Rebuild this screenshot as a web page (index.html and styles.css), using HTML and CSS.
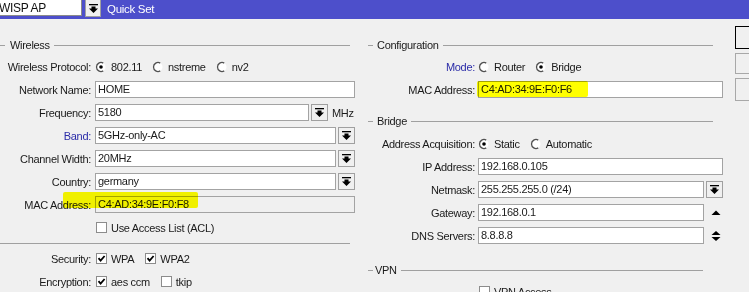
FILE: index.html
```html
<!DOCTYPE html>
<html>
<head>
<meta charset="utf-8">
<link rel="stylesheet" href="styles.css">
</head>
<body>
<div class="topbar">
  <div class="qs-select">WISP AP</div>
  <div class="btn dd top-dd"><svg class="ico-dd" width="9" height="9" viewBox="0 0 9 9"><rect x="0" y="0" width="9" height="1.3"/><polygon points="2.5,2.5 6.5,2.5 6.5,4.5 9,4.5 4.5,9 0,4.5 2.5,4.5"/></svg></div>
  <div class="qs-title">Quick Set</div>
</div>

<div class="main">
  <div class="col col-left">
    <div class="legend leg-left"><span class="dash"></span><span class="leg-text">Wireless</span><span class="leg-line"></span></div>
    <div class="form">
      <div class="row"><span class="lbl">Wireless Protocol:</span>
        <div class="field opts">
          <span class="opt"><svg class="radio" width="12" height="12" viewBox="0 0 12 12"><circle cx="6" cy="6" r="4.5" fill="#fff"/><path d="M8.25,2.1 A4.5,4.5 0 1 0 8.25,9.9" fill="none" stroke="#505050" stroke-width="1.3"/><circle cx="6" cy="6" r="1.8" fill="#000"/></svg>802.11</span>
          <span class="opt"><svg class="radio" width="12" height="12" viewBox="0 0 12 12"><circle cx="6" cy="6" r="4.5" fill="#fff"/><path d="M8.25,2.1 A4.5,4.5 0 1 0 8.25,9.9" fill="none" stroke="#505050" stroke-width="1.3"/></svg>nstreme</span>
          <span class="opt"><svg class="radio" width="12" height="12" viewBox="0 0 12 12"><circle cx="6" cy="6" r="4.5" fill="#fff"/><path d="M8.25,2.1 A4.5,4.5 0 1 0 8.25,9.9" fill="none" stroke="#505050" stroke-width="1.3"/></svg>nv2</span>
        </div>
      </div>
      <div class="row"><span class="lbl">Network Name:</span><div class="field"><div class="inp w-full">HOME</div></div></div>
      <div class="row"><span class="lbl">Frequency:</span><div class="field"><div class="inp w-freq">5180</div><div class="btn dd"><svg class="ico-dd" width="9" height="9" viewBox="0 0 9 9"><rect x="0" y="0" width="9" height="1.3"/><polygon points="2.5,2.5 6.5,2.5 6.5,4.5 9,4.5 4.5,9 0,4.5 2.5,4.5"/></svg></div><span class="unit">MHz</span></div></div>
      <div class="row"><span class="lbl blue">Band:</span><div class="field"><div class="inp w-sel">5GHz-only-AC</div><div class="btn dd"><svg class="ico-dd" width="9" height="9" viewBox="0 0 9 9"><rect x="0" y="0" width="9" height="1.3"/><polygon points="2.5,2.5 6.5,2.5 6.5,4.5 9,4.5 4.5,9 0,4.5 2.5,4.5"/></svg></div></div></div>
      <div class="row"><span class="lbl">Channel Width:</span><div class="field"><div class="inp w-sel">20MHz</div><div class="btn dd"><svg class="ico-dd" width="9" height="9" viewBox="0 0 9 9"><rect x="0" y="0" width="9" height="1.3"/><polygon points="2.5,2.5 6.5,2.5 6.5,4.5 9,4.5 4.5,9 0,4.5 2.5,4.5"/></svg></div></div></div>
      <div class="row"><span class="lbl">Country:</span><div class="field"><div class="inp w-sel">germany</div><div class="btn dd"><svg class="ico-dd" width="9" height="9" viewBox="0 0 9 9"><rect x="0" y="0" width="9" height="1.3"/><polygon points="2.5,2.5 6.5,2.5 6.5,4.5 9,4.5 4.5,9 0,4.5 2.5,4.5"/></svg></div></div></div>
      <div class="row hl-row"><span class="lbl">MAC Address:</span><div class="field"><div class="inp w-full disabled">C4:AD:34:9E:F0:F8</div></div><span class="hl hl-left"></span></div>
      <div class="row"><span class="lbl"></span><div class="field opts"><span class="opt"><svg class="cb" width="11" height="11" viewBox="0 0 11 11"><rect x="0.5" y="0.5" width="10" height="10" fill="#fff" stroke="#8c8c8c"/></svg>Use Access List (ACL)</span></div></div>
    </div>
    <div class="sep"></div>
    <div class="form">
      <div class="row"><span class="lbl">Security:</span>
        <div class="field opts">
          <span class="opt"><svg class="cb" width="11" height="11" viewBox="0 0 11 11"><rect x="0.5" y="0.5" width="10" height="10" fill="#fff" stroke="#8c8c8c"/><path d="M2.5,5.2 L4.6,7.6 L8.6,3" fill="none" stroke="#000" stroke-width="1.8"/></svg>WPA</span>
          <span class="opt"><svg class="cb" width="11" height="11" viewBox="0 0 11 11"><rect x="0.5" y="0.5" width="10" height="10" fill="#fff" stroke="#8c8c8c"/><path d="M2.5,5.2 L4.6,7.6 L8.6,3" fill="none" stroke="#000" stroke-width="1.8"/></svg>WPA2</span>
        </div>
      </div>
      <div class="row"><span class="lbl">Encryption:</span>
        <div class="field opts">
          <span class="opt"><svg class="cb" width="11" height="11" viewBox="0 0 11 11"><rect x="0.5" y="0.5" width="10" height="10" fill="#fff" stroke="#8c8c8c"/><path d="M2.5,5.2 L4.6,7.6 L8.6,3" fill="none" stroke="#000" stroke-width="1.8"/></svg>aes ccm</span>
          <span class="opt"><svg class="cb" width="11" height="11" viewBox="0 0 11 11"><rect x="0.5" y="0.5" width="10" height="10" fill="#fff" stroke="#8c8c8c"/></svg>tkip</span>
        </div>
      </div>
    </div>
  </div>

  <div class="col col-right">
    <div class="legend leg-right"><span class="dash"></span><span class="leg-text">Configuration</span><span class="leg-line"></span></div>
    <div class="form rform">
      <div class="row"><span class="lbl blue">Mode:</span>
        <div class="field opts">
          <span class="opt"><svg class="radio" width="12" height="12" viewBox="0 0 12 12"><circle cx="6" cy="6" r="4.5" fill="#fff"/><path d="M8.25,2.1 A4.5,4.5 0 1 0 8.25,9.9" fill="none" stroke="#505050" stroke-width="1.3"/></svg>Router</span>
          <span class="opt"><svg class="radio" width="12" height="12" viewBox="0 0 12 12"><circle cx="6" cy="6" r="4.5" fill="#fff"/><path d="M8.25,2.1 A4.5,4.5 0 1 0 8.25,9.9" fill="none" stroke="#505050" stroke-width="1.3"/><circle cx="6" cy="6" r="1.8" fill="#000"/></svg>Bridge</span>
        </div>
      </div>
      <div class="row hl-row"><span class="lbl">MAC Address:</span><div class="field"><div class="inp w-rfull">C4:AD:34:9E:F0:F6</div></div><span class="hl hl-right"></span></div>
    </div>

    <div class="legend leg-right leg-bridge"><span class="dash"></span><span class="leg-text">Bridge</span><span class="leg-line"></span></div>
    <div class="form rform">
      <div class="row"><span class="lbl">Address Acquisition:</span>
        <div class="field opts">
          <span class="opt"><svg class="radio" width="12" height="12" viewBox="0 0 12 12"><circle cx="6" cy="6" r="4.5" fill="#fff"/><path d="M8.25,2.1 A4.5,4.5 0 1 0 8.25,9.9" fill="none" stroke="#505050" stroke-width="1.3"/><circle cx="6" cy="6" r="1.8" fill="#000"/></svg>Static</span>
          <span class="opt"><svg class="radio" width="12" height="12" viewBox="0 0 12 12"><circle cx="6" cy="6" r="4.5" fill="#fff"/><path d="M8.25,2.1 A4.5,4.5 0 1 0 8.25,9.9" fill="none" stroke="#505050" stroke-width="1.3"/></svg>Automatic</span>
        </div>
      </div>
      <div class="row"><span class="lbl">IP Address:</span><div class="field"><div class="inp w-rfull">192.168.0.105</div></div></div>
      <div class="row"><span class="lbl">Netmask:</span><div class="field"><div class="inp w-rsel">255.255.255.0 (/24)</div><div class="btn dd"><svg class="ico-dd" width="9" height="9" viewBox="0 0 9 9"><rect x="0" y="0" width="9" height="1.3"/><polygon points="2.5,2.5 6.5,2.5 6.5,4.5 9,4.5 4.5,9 0,4.5 2.5,4.5"/></svg></div></div></div>
      <div class="row"><span class="lbl">Gateway:</span><div class="field"><div class="inp w-rsel">192.168.0.1</div><span class="arrows"><svg width="10" height="12" viewBox="0 0 10 12"><polygon points="0.5,8 9.5,8 5,3.5"/></svg></span></div></div>
      <div class="row"><span class="lbl">DNS Servers:</span><div class="field"><div class="inp w-rsel">8.8.8.8</div><span class="arrows"><svg width="10" height="12" viewBox="0 0 10 12"><polygon points="0.5,5 9.5,5 5,1"/><polygon points="0.5,7 9.5,7 5,11"/></svg></span></div></div>
    </div>

    <div class="legend leg-vpn"><span class="dash"></span><span class="leg-text">VPN</span><span class="leg-line"></span></div>
    <div class="form rform">
      <div class="row"><span class="lbl"></span><div class="field opts"><span class="opt"><svg class="cb" width="11" height="11" viewBox="0 0 11 11"><rect x="0.5" y="0.5" width="10" height="10" fill="#fff" stroke="#8c8c8c"/></svg>VPN Access</span></div></div>
    </div>
  </div>

  <div class="col col-side">
    <div class="sbtn focus"></div>
    <div class="sbtn short"></div>
    <div class="sbtn"></div>
  </div>
</div>
</body>
</html>
```

FILE: styles.css
```css
html, body {
  margin: 0;
  padding: 0;
}
body {
  width: 749px;
  height: 292px;
  overflow: hidden;
  background: #f0f0f0;
  font-family: "Liberation Sans", Arial, sans-serif;
  font-size: 11px;
  letter-spacing: -0.3px;
  color: #1a1a1a;
}

/* top bar */
.topbar {
  height: 19px;
  background: #4d4fcb;
  display: flex;
  align-items: flex-start;
}
.qs-select {
  width: 83px;
  height: 16px;
  margin-left: -1px;
  box-sizing: border-box;
  background: #fff;
  border: 1px solid #8a8a8a;
  border-top: none;
  line-height: 16px;
  font-size: 12px;
  text-indent: -1px;
  color: #111;
  overflow: hidden;
}
.btn {
  box-sizing: border-box;
  width: 17px;
  height: 17px;
  background: #f0f0f0;
  border: 1px solid #a0a0a0;
  display: flex;
  align-items: center;
  justify-content: center;
  flex: none;
}
.top-dd {
  margin-left: 3px;
  height: 17px;
  width: 16px;
  border-top: none;
}
.ico-dd { fill: #000; }
.qs-title {
  margin-left: 6px;
  color: #fff;
  line-height: 18px;
  font-size: 11.5px;
}

/* layout */
.main {
  display: flex;
  align-items: flex-start;
}
.col-left {
  width: 355px;
  padding-top: 19px;
}
.col-right {
  width: 355px;
  margin-left: 13px;
  padding-top: 19px;
}
.col-side {
  margin-left: 12px;
  padding-top: 7px;
  display: flex;
  flex-direction: column;
  gap: 4px;
}
.sbtn {
  width: 30px;
  height: 23px;
  box-sizing: border-box;
  border: 1px solid #a8a8a8;
  background: #f0f0f0;
}
.sbtn.focus { border-color: #000; }
.sbtn.short { height: 21px; }

/* legends */
.legend {
  height: 14px;
  display: flex;
  align-items: center;
}
.dash {
  width: 5px;
  height: 1px;
  background: #a0a0a0;
  flex: none;
}
.leg-text {
  margin: 0 4px;
  color: #1a1a1a;
}
.leg-line {
  flex: 1;
  height: 1px;
  background: #a0a0a0;
}
.leg-left { width: 350px; }
.leg-left .leg-text { margin-left: 5px; }
.leg-right { width: 345px; }
.leg-vpn { width: 335px; margin-top: 19px; }
.leg-vpn .leg-text { margin-left: 2px; }
.leg-bridge { margin-top: 16px; }

/* forms */
.form {
  margin-top: 6px;
  display: flex;
  flex-direction: column;
  gap: 6px;
}
.leg-bridge + .form { margin-top: 7px; }
.row {
  height: 17px;
  display: flex;
  align-items: center;
  position: relative;
}
.lbl {
  width: 91px;
  margin-right: 4px;
  text-align: right;
  flex: none;
  white-space: nowrap;
}
.rform .lbl {
  width: 107px;
  margin-right: 3px;
}
.blue { color: #2b2ca8; }
.field {
  display: flex;
  align-items: center;
  height: 17px;
  position: relative;
  z-index: 0;
}
.inp {
  box-sizing: border-box;
  height: 17px;
  border: 1px solid #a3a3a3;
  background: #fff;
  padding-left: 2px;
  line-height: 15px;
  white-space: nowrap;
  overflow: hidden;
}
.inp.disabled { background: #f0f0f0; }
.field .btn { margin-left: 2px; }
.w-full { width: 260px; }
.w-freq { width: 214px; }
.w-sel { width: 241px; }
.w-rfull { width: 245px; }
.w-rsel { width: 226px; }
.unit { margin-left: 4px; }
.arrows {
  margin-left: 7px;
  display: flex;
  align-items: center;
}
.arrows svg { fill: #000; }

.opts { gap: 10px; }
.opt {
  display: flex;
  align-items: center;
  white-space: nowrap;
}
.radio { margin-right: 4px; flex: none; }
.cb { margin: 0 4px 0 1px; flex: none; }

.sep {
  width: 350px;
  height: 1px;
  background: #a0a0a0;
  margin-top: 7px;
}

/* highlighter marks */
.hl {
  position: absolute;
  background: #ffff00;
  mix-blend-mode: multiply;
  border-radius: 2px;
  z-index: 2;
}
.hl-left { left: 63px; top: -4px; width: 135px; height: 16px; }
.hl-right { left: 109px; top: 0; width: 111px; height: 16px; }
```
